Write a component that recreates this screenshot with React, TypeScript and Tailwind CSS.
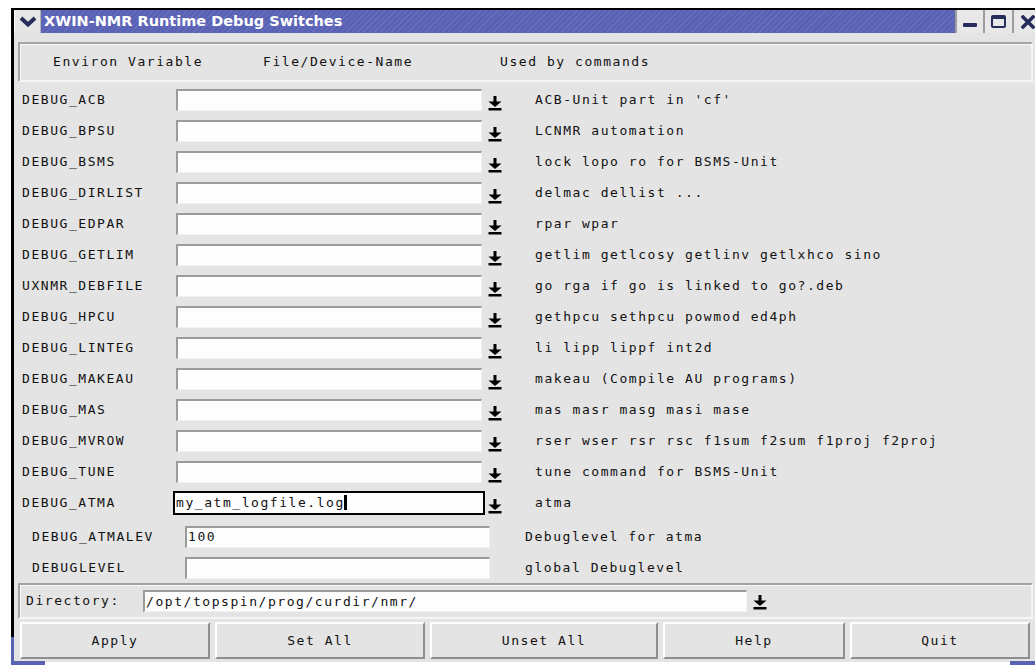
import React from 'react'

const mono = "font-['DejaVu_Sans_Mono',monospace] text-[13px] tracking-[1.55px] text-[#111] whitespace-pre"

const switches = [
    ['DEBUG_ACB', "ACB-Unit part in 'cf'"],
    ['DEBUG_BPSU', 'LCNMR automation'],
    ['DEBUG_BSMS', 'lock lopo ro for BSMS-Unit'],
    ['DEBUG_DIRLIST', 'delmac dellist ...'],
    ['DEBUG_EDPAR', 'rpar wpar'],
    ['DEBUG_GETLIM', 'getlim getlcosy getlinv getlxhco sino'],
    ['UXNMR_DEBFILE', 'go rga if go is linked to go?.deb'],
    ['DEBUG_HPCU', 'gethpcu sethpcu powmod ed4ph'],
    ['DEBUG_LINTEG', 'li lipp lippf int2d'],
    ['DEBUG_MAKEAU', 'makeau (Compile AU programs)'],
    ['DEBUG_MAS', 'mas masr masg masi mase'],
    ['DEBUG_MVROW', 'rser wser rsr rsc f1sum f2sum f1proj f2proj'],
    ['DEBUG_TUNE', 'tune command for BSMS-Unit'],
]

const levels = [
    ['DEBUG_ATMALEV', '100', 'Debuglevel for atma'],
    ['DEBUGLEVEL', '', 'global Debuglevel'],
]

const buttons = [
    ['Apply', 'w-[190px]'],
    ['Set All', 'w-[210px]'],
    ['Unset All', 'w-[228px]'],
    ['Help', 'w-[182px]'],
    ['Quit', 'w-[180px]'],
]

function DownArrow() {
    return (
        <svg width="14" height="15" viewBox="0 0 14 15" className="shrink-0 mt-[5px]">
            <rect x="5.5" y="0" width="3" height="6" fill="#000" />
            <polygon points="0.5,5.5 13.5,5.5 7,11" fill="#000" />
            <rect x="0.5" y="12" width="13" height="2.5" fill="#000" />
        </svg>
    )
}

function Field({ className = '', value = '' }: { className?: string; value?: string }) {
    return (
        <div
            className={`h-[22px] bg-[#fdfdfd] border-t-2 border-l-2 border-[#9b9b9b] border-b border-r border-b-[#f2f2f2] border-r-[#f2f2f2] flex items-center pl-[1px] ${mono} ${className}`}
        >
            {value}
        </div>
    )
}

function TitleBar() {
    return (
        <div className="flex h-[23px] shrink-0">
            <div className="w-[27px] bg-[#e6e6e6] border-l border-white border-r border-r-[#b5b5b5] flex items-center justify-center">
                <svg width="18" height="11" viewBox="0 0 18 11">
                    <polyline points="2,2 9,8.5 16,2" fill="none" stroke="#262c5c" strokeWidth="4" strokeLinejoin="miter" />
                </svg>
            </div>
            <div className="flex-1 flex items-center pl-[3px] bg-[repeating-linear-gradient(135deg,#5a62b5_0px,#5a62b5_3px,#6870bd_3px,#6870bd_4px)]">
                <span className="font-['DejaVu_Sans',sans-serif] font-bold text-[14.5px] text-white">
                    XWIN-NMR Runtime Debug Switches
                </span>
            </div>
            <div className="w-[28px] bg-[#e8e8e8] border-l-2 border-[#9d9d9d] flex items-end justify-center pb-[6px]">
                <div className="w-[14px] h-[4px] bg-[#262c5c] rounded-[1px]" />
            </div>
            <div className="w-[29px] bg-[#e8e8e8] border-l-2 border-[#9d9d9d] flex items-center justify-center">
                <div className="w-[15px] h-[13px] border-2 border-t-4 border-[#262c5c] rounded-[2px]" />
            </div>
            <div className="w-[29px] bg-[#e8e8e8] border-l-2 border-[#9d9d9d] flex items-center pl-[7px]">
                <svg width="14" height="14" viewBox="0 0 14 14">
                    <path d="M2 2 L12 12 M12 2 L2 12" stroke="#262c5c" strokeWidth="3.5" strokeLinecap="square" />
                </svg>
            </div>
        </div>
    )
}

export default function App() {
    return (
        <div className="relative w-[1035px] h-[665px] overflow-hidden bg-white pt-2 pl-[11px]">
            <div className="w-[1030px] h-[654px] flex flex-col border-t-2 border-l-[3px] border-black bg-[#e4e4e4]">
                <TitleBar />

                <div className="flex-1 flex flex-col pl-[4px] pr-[8px] pt-[9px]">
                    {/* column headings */}
                    <div className={`h-[40px] flex items-center border-2 border-[#a3a3a3] border-b-[#f5f5f5] border-r-[#f5f5f5] shadow-[inset_1px_1px_0_#f8f8f8] ${mono}`}>
                        <span className="pl-[33px] w-[243px]">Environ Variable</span>
                        <span className="w-[237px]">File/Device-Name</span>
                        <span>Used by commands</span>
                    </div>

                    <div className="pt-[2px]">
                        {switches.map(([name, used]) => (
                            <div key={name} className="h-[31px] flex items-center">
                                <span className={`w-[158px] pl-[4px] ${mono}`}>{name}</span>
                                <Field className="w-[306px]" />
                                <div className="ml-[6px] self-start mt-[7px]">
                                    <DownArrow />
                                </div>
                                <span className={`ml-[33px] ${mono}`}>{used}</span>
                            </div>
                        ))}

                        {/* row with keyboard focus */}
                        <div className="h-[31px] flex items-center">
                            <span className={`w-[155px] pl-[4px] ${mono}`}>DEBUG_ATMA</span>
                            <div className={`w-[312px] h-[24px] border-2 border-black bg-[#fdfdfd] flex items-center pl-[1px] ${mono}`}>
                                my_atm_logfile.log
                                <span className="w-[3px] h-[15px] bg-black -ml-[1px]" />
                            </div>
                            <div className="ml-[3px] self-start mt-[7px]">
                                <DownArrow />
                            </div>
                            <span className={`ml-[33px] ${mono}`}>atma</span>
                        </div>
                    </div>

                    <div className="pt-[3px]">
                        {levels.map(([name, value, used]) => (
                            <div key={name} className="h-[31px] flex items-center">
                                <span className={`w-[167px] pl-[14px] ${mono}`}>{name}</span>
                                <Field className="w-[305px]" value={value} />
                                <span className={`ml-[35px] ${mono}`}>{used}</span>
                            </div>
                        ))}
                    </div>

                    {/* directory chooser */}
                    <div className="h-[36px] flex items-center border-2 border-[#a3a3a3] border-b-[#f5f5f5] border-r-[#f5f5f5] shadow-[inset_1px_1px_0_#f8f8f8] pl-[6px]">
                        <span className={`w-[117px] ${mono}`}>Directory:</span>
                        <Field className="w-[604px] h-[21px]" value="/opt/topspin/prog/curdir/nmr/" />
                        <div className="ml-[6px] self-start mt-[5px]">
                            <DownArrow />
                        </div>
                    </div>

                    <div className="flex gap-[5px] pl-[2px] pt-[3px]">
                        {buttons.map(([label, w]) => (
                            <button
                                key={label}
                                className={`${w} h-[37px] bg-[#e4e4e4] border-2 border-t-white border-l-white border-b-[#8e8e8e] border-r-[#8e8e8e] ${mono}`}
                            >
                                {label}
                            </button>
                        ))}
                    </div>
                </div>
            </div>

            {/* resize corners of the frame */}
            <div className="absolute left-[11px] top-[637px] w-[3px] h-[28px] bg-[#5a62b5]" />
            <div className="absolute left-[11px] top-[661px] w-[34px] h-[4px] bg-[#5a62b5]" />
            <div className="absolute left-[1010px] top-[661px] w-[25px] h-[4px] bg-[#5a62b5]" />
        </div>
    )
}
